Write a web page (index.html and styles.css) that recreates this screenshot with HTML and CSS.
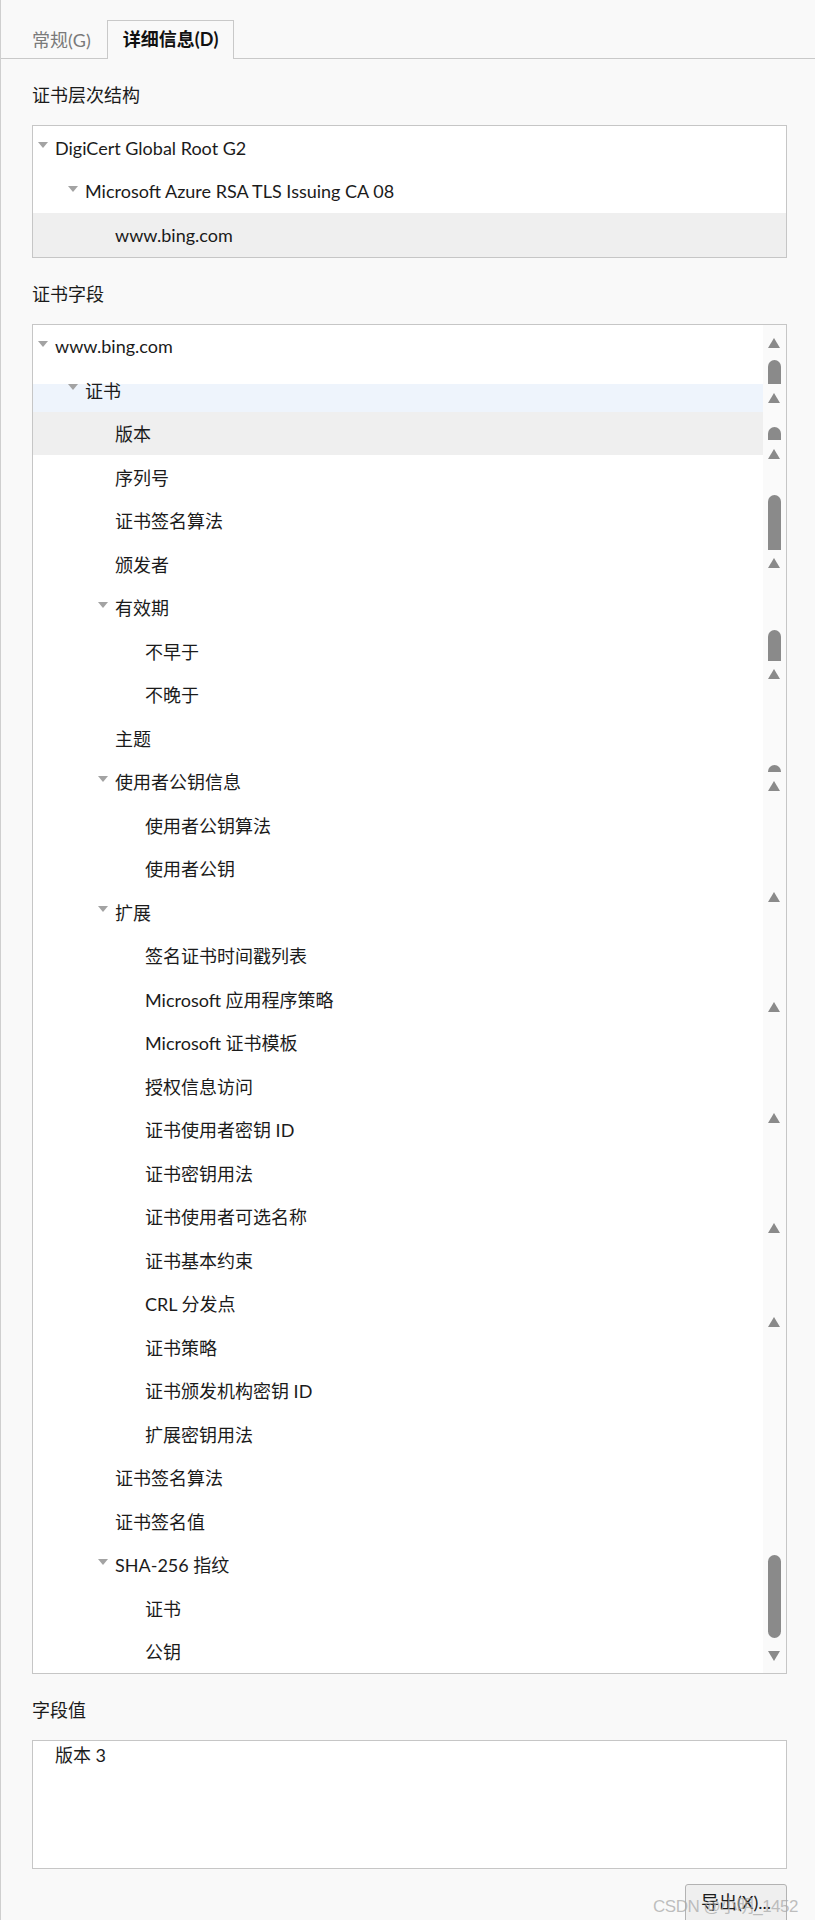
FILE: index.html
```html
<!DOCTYPE html>
<html lang="zh-CN">
<head>
<meta charset="utf-8">
<title>证书查看器</title>
<link rel="stylesheet" href="styles.css">
</head>
<body>
<div class="page">
  <div class="tabs">
    <div class="tab">常规(G)</div>
    <div class="tab active">详细信息(D)</div>
  </div>

  <div class="label first">证书层次结构</div>
  <div class="box hier">
    <div class="row l0"><span class="tw"></span><span class="t">DigiCert Global Root G2</span></div>
    <div class="row l1"><span class="tw"></span><span class="t">Microsoft Azure RSA TLS Issuing CA 08</span></div>
    <div class="row l2 sel"><span class="tw leaf"></span><span class="t">www.bing.com</span></div>
  </div>

  <div class="label">证书字段</div>
  <div class="box fields">
    <div class="list">
      <div class="row l0"><span class="tw"></span><span class="t">www.bing.com</span></div>
      <div class="row l1 partial"><span class="tw"></span><span class="t">证书</span></div>
      <div class="row l2 sel"><span class="tw leaf"></span><span class="t">版本</span></div>
      <div class="row l2"><span class="tw leaf"></span><span class="t">序列号</span></div>
      <div class="row l2"><span class="tw leaf"></span><span class="t">证书签名算法</span></div>
      <div class="row l2"><span class="tw leaf"></span><span class="t">颁发者</span></div>
      <div class="row l1x"><span class="tw"></span><span class="t">有效期</span></div>
      <div class="row l3"><span class="tw leaf"></span><span class="t">不早于</span></div>
      <div class="row l3"><span class="tw leaf"></span><span class="t">不晚于</span></div>
      <div class="row l2"><span class="tw leaf"></span><span class="t">主题</span></div>
      <div class="row l1x"><span class="tw"></span><span class="t">使用者公钥信息</span></div>
      <div class="row l3"><span class="tw leaf"></span><span class="t">使用者公钥算法</span></div>
      <div class="row l3"><span class="tw leaf"></span><span class="t">使用者公钥</span></div>
      <div class="row l1x"><span class="tw"></span><span class="t">扩展</span></div>
      <div class="row l3"><span class="tw leaf"></span><span class="t">签名证书时间戳列表</span></div>
      <div class="row l3"><span class="tw leaf"></span><span class="t">Microsoft 应用程序策略</span></div>
      <div class="row l3"><span class="tw leaf"></span><span class="t">Microsoft 证书模板</span></div>
      <div class="row l3"><span class="tw leaf"></span><span class="t">授权信息访问</span></div>
      <div class="row l3"><span class="tw leaf"></span><span class="t">证书使用者密钥 ID</span></div>
      <div class="row l3"><span class="tw leaf"></span><span class="t">证书密钥用法</span></div>
      <div class="row l3"><span class="tw leaf"></span><span class="t">证书使用者可选名称</span></div>
      <div class="row l3"><span class="tw leaf"></span><span class="t">证书基本约束</span></div>
      <div class="row l3"><span class="tw leaf"></span><span class="t">CRL 分发点</span></div>
      <div class="row l3"><span class="tw leaf"></span><span class="t">证书策略</span></div>
      <div class="row l3"><span class="tw leaf"></span><span class="t">证书颁发机构密钥 ID</span></div>
      <div class="row l3"><span class="tw leaf"></span><span class="t">扩展密钥用法</span></div>
      <div class="row l2"><span class="tw leaf"></span><span class="t">证书签名算法</span></div>
      <div class="row l2"><span class="tw leaf"></span><span class="t">证书签名值</span></div>
      <div class="row l1x"><span class="tw"></span><span class="t">SHA-256 指纹</span></div>
      <div class="row l3"><span class="tw leaf"></span><span class="t">证书</span></div>
      <div class="row l3"><span class="tw leaf"></span><span class="t">公钥</span></div>
    </div>
    <div class="sbar">
      <span class="up" style="top:13px"></span>
      <span class="th" style="top:35px;height:24px"></span>
      <span class="up" style="top:68px"></span>
      <span class="th" style="top:102px;height:13px"></span>
      <span class="up" style="top:124px"></span>
      <span class="th" style="top:170px;height:55px"></span>
      <span class="up" style="top:233px"></span>
      <span class="th" style="top:305px;height:31px"></span>
      <span class="up" style="top:344px"></span>
      <span class="th" style="top:440px;height:7px"></span>
      <span class="up" style="top:456px"></span>
      <span class="up" style="top:567px"></span>
      <span class="up" style="top:677px"></span>
      <span class="up" style="top:788px"></span>
      <span class="up" style="top:898px"></span>
      <span class="up" style="top:992px"></span>
      <span class="th full" style="top:1230px;height:83px"></span>
      <span class="down" style="top:1326px"></span>
    </div>
  </div>

  <div class="label">字段值</div>
  <div class="box value">版本 3</div>

  <div class="footer">
    <button class="btn">导出(X)...</button>
    <span class="wm">CSDN @小明_1452</span>
  </div>
</div>
</body>
</html>
```
FILE: styles.css
```css
html, body {
  margin: 0;
  padding: 0;
  background: #f9f9f9;
}
body {
  font-family: "Lato", "Noto Sans CJK SC", sans-serif;
  font-size: 18px;
  color: #1b1b1b;
  height: 1920px;
  overflow: hidden;
}
.page {
  border-left: 1px solid #cfcfcf;
  min-height: 1920px;
  box-sizing: border-box;
  padding-left: 31px;
  padding-right: 28px;
}
.tabs {
  display: flex;
  align-items: flex-end;
  height: 58px;
  border-bottom: 1px solid #c9c9c9;
  margin-left: -31px;
  margin-right: -28px;
  padding-left: 15px;
}
.tab {
  height: 37px;
  line-height: 36px;
  padding: 0 15px;
  color: #7a7a7a;
  margin-bottom: -1px;
  border: 1px solid transparent;
  border-bottom: none;
}
.tab.active {
  color: #111;
  font-weight: bold;
  border-color: #c9c9c9;
  background: #f9f9f9;
  height: 38px;
}
.label {
  line-height: 24px;
  margin-top: 24px;
  margin-bottom: 18px;
  color: #1b1b1b;
}
.box {
  border: 1px solid #c6c6c6;
  background: #fff;
}
.row {
  display: flex;
  align-items: center;
  height: 43.5px;
  white-space: nowrap;
}
.row.sel { background: #efefef; }
.row.partial {
  background: linear-gradient(#fff 0, #fff 16px, #eef4fc 16px);
}
.tw {
  width: 0;
  height: 0;
  border-left: 5.5px solid transparent;
  border-right: 5.5px solid transparent;
  border-top: 6px solid #a3a3a3;
  margin-right: 7px;
  margin-top: -5px;
  flex: none;
}
.tw.leaf { visibility: hidden; }
.l0 { padding-left: 5px; }
.l1 { padding-left: 35px; }
.l1x { padding-left: 65px; }
.l2 { padding-left: 65px; }
.l3 { padding-left: 95px; }
.fields {
  display: flex;
}
.list {
  flex: 1;
  min-width: 0;
}
.sbar {
  position: relative;
  width: 23px;
  flex: none;
  background: #fafafa;
}
.sbar span {
  position: absolute;
  left: 5px;
}
.up, .down {
  width: 0;
  height: 0;
  border-left: 6.5px solid transparent;
  border-right: 6.5px solid transparent;
}
.up { border-bottom: 10px solid #8a8a8a; }
.down { border-top: 10px solid #8a8a8a; }
.th {
  width: 13px;
  background: #8a8a8a;
  border-radius: 6.5px 6.5px 0 0;
}
.th.full { border-radius: 6.5px; }
.value {
  padding: 2px 0 0 22px;
  line-height: 24px;
  box-sizing: border-box;
  height: 129px;
}
.footer {
  position: relative;
  display: flex;
  justify-content: flex-end;
  padding-top: 15px;
}
.btn {
  font-family: inherit;
  font-size: 18px;
  color: #1b1b1b;
  width: 102px;
  height: 40px;
  border: 1px solid #b3b3b3;
  border-radius: 3px;
  background: #efefef;
  padding: 0 0 6px;
  margin-right: 0;
}
.wm {
  position: absolute;
  right: -11px;
  top: 23px;
  font-size: 17px;
  color: rgba(170, 170, 170, 0.75);
  font-family: "Liberation Sans", "Noto Sans CJK SC", sans-serif;
  letter-spacing: -0.5px;
  pointer-events: none;
}
```
